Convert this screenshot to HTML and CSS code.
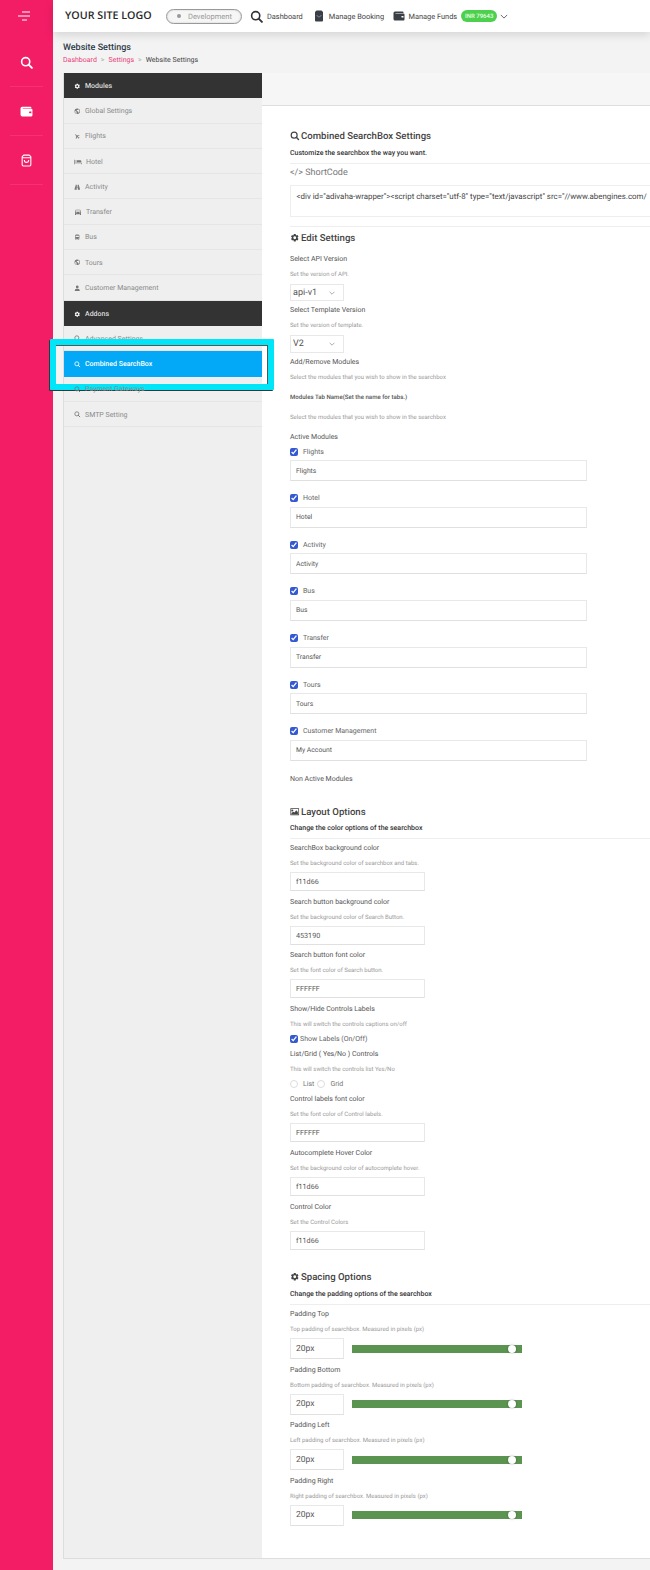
FILE: index.html
```html
<!DOCTYPE html>
<html lang="en">
<head>
<meta charset="utf-8">
<title>Website Settings</title>
<link rel="stylesheet" href="styles.css">
</head>
<body>
<svg class="defs" width="0" height="0" aria-hidden="true">
  <defs>
    <symbol id="i-cog" viewBox="0 0 24 24"><path d="M19.14 12.94c.04-.3.06-.61.06-.94 0-.32-.02-.64-.07-.94l2.03-1.58a.49.49 0 0 0 .12-.61l-1.92-3.32a.488.488 0 0 0-.59-.22l-2.39.96c-.5-.38-1.03-.7-1.62-.94l-.36-2.54a.484.484 0 0 0-.48-.41h-3.84c-.24 0-.43.17-.47.41l-.36 2.54c-.59.24-1.13.57-1.62.94l-2.39-.96c-.22-.08-.47 0-.59.22L2.74 8.87c-.12.21-.08.47.12.61l2.03 1.58c-.05.3-.09.63-.09.94s.02.64.07.94l-2.03 1.58a.49.49 0 0 0-.12.61l1.92 3.32c.12.22.37.29.59.22l2.39-.96c.5.38 1.03.7 1.62.94l.36 2.54c.05.24.24.41.48.41h3.84c.24 0 .44-.17.47-.41l.36-2.54c.59-.24 1.13-.56 1.62-.94l2.39.96c.22.08.47 0 .59-.22l1.92-3.32c.12-.22.07-.47-.12-.61l-2.01-1.58zM12 15.6A3.6 3.6 0 1 1 12 8.4a3.6 3.6 0 0 1 0 7.2z"/></symbol>
    <symbol id="i-globe" viewBox="0 0 24 24"><path d="M12 2a10 10 0 1 0 0 20 10 10 0 0 0 0-20zm-1 17.9A8 8 0 0 1 4.2 10L9 15v1a2 2 0 0 0 2 2v1.9zm6.9-2.5A2 2 0 0 0 16 16h-1v-3a1 1 0 0 0-1-1H8v-2h2a1 1 0 0 0 1-1V7h2a2 2 0 0 0 2-2v-.4a8 8 0 0 1 2.9 12.8z"/></symbol>
    <symbol id="i-plane" viewBox="0 0 24 24"><path transform="rotate(-45 12 12)" d="M21 16v-2l-8-5V3.5c0-.83-.67-1.5-1.5-1.5S10 2.67 10 3.5V9l-8 5v2l8-2.5V19l-2 1.5V22l3.5-1 3.5 1v-1.5L13 19v-5.5l8 2.5z"/></symbol>
    <symbol id="i-bed" viewBox="0 0 24 24"><path d="M1 5h2v9h20v5h-2v-3H3v3H1V5zm3 4a2 2 0 1 1 4 0 2 2 0 0 1-4 0zm5-2h10a3 3 0 0 1 3 3v3H9V7zM4 12h4v1H4v-1z"/></symbol>
    <symbol id="i-binoculars" viewBox="0 0 24 24"><path d="M6 3h4v3h4V3h4v3l1 2 3 10v3h-8v-8h-4v8H2v-3L5 8l1-2V3zm4 5v3h4V8h-4z"/></symbol>
    <symbol id="i-car" viewBox="0 0 24 24"><path d="M18.92 6.01C18.72 5.42 18.16 5 17.5 5h-11c-.66 0-1.21.42-1.42 1.01L3 12v8c0 .55.45 1 1 1h1c.55 0 1-.45 1-1v-1h12v1c0 .55.45 1 1 1h1c.55 0 1-.45 1-1v-8l-2.08-5.99zM6.5 16a1.5 1.5 0 1 1 0-3 1.5 1.5 0 0 1 0 3zm11 0a1.5 1.5 0 1 1 0-3 1.5 1.5 0 0 1 0 3zM5 11l1.5-4.5h11L19 11H5z"/></symbol>
    <symbol id="i-bus" viewBox="0 0 24 24"><path d="M4 16c0 .88.39 1.67 1 2.22V20c0 .55.45 1 1 1h1c.55 0 1-.45 1-1v-1h8v1c0 .55.45 1 1 1h1c.55 0 1-.45 1-1v-1.78c.61-.55 1-1.34 1-2.22V6c0-3.5-3.58-4-8-4s-8 .5-8 4v10zm3.5 1a1.5 1.5 0 1 1 0-3 1.5 1.5 0 0 1 0 3zm9 0a1.5 1.5 0 1 1 0-3 1.5 1.5 0 0 1 0 3zm1.5-6H6V6h12v5z"/></symbol>
    <symbol id="i-user" viewBox="0 0 24 24"><path d="M12 12a5 5 0 1 0 0-10 5 5 0 0 0 0 10zm0 2c-3 0-9 1.5-9 5v3h18v-3c0-3.500-6-5-9-5z"/></symbol>
    <symbol id="i-search" viewBox="0 0 24 24"><circle cx="10.500" cy="10.500" r="7.500" fill="none" stroke="currentColor" stroke-width="3"/><path d="M16 16l6 6" fill="none" stroke="currentColor" stroke-width="3.500" stroke-linecap="round"/></symbol>
    <symbol id="i-wallet" viewBox="0 0 24 24"><path d="M4 3h15a2 2 0 0 1 2 2v1H5v1h16a2 2 0 0 1 2 2v10a2 2 0 0 1-2 2H4a3 3 0 0 1-3-3V6a3 3 0 0 1 3-3zm14 9a1.500 1.500 0 1 0 0 3h3v-3h-3z"/></symbol>
    <symbol id="i-image" viewBox="0 0 24 24"><path d="M1 3h22v18H1V3zm2 2v14h18V5H3zm3 1.500a2.500 2.500 0 1 1 0 5 2.500 2.500 0 0 1 0-5zM4 18v-3l4-3 3 2 5-6 4 5v5H4z"/></symbol>
  </defs>
</svg>

<div class="app">
  <nav class="rail">
    <div class="rail-top">
      <svg class="menu-icon" viewBox="0 0 12 10"><path d="M4 1h8M0 5h12M4 9h5" fill="none" stroke="currentColor" stroke-width="1"/></svg>
    </div>
    <div class="rail-item"><svg class="rail-icon"><use href="#i-search"/></svg></div>
    <div class="rail-item"><svg class="rail-icon"><use href="#i-wallet"/></svg></div>
    <div class="rail-item">
      <svg class="rail-icon" viewBox="0 0 24 24"><path d="M7 2h10l3 3v15a2 2 0 0 1-2 2H6a2 2 0 0 1-2-2V5l3-3zM4 7h16M8 11c0 6 8 6 8 0" fill="none" stroke="currentColor" stroke-width="2"/></svg>
    </div>
  </nav>

  <div class="main">
    <header class="topbar">
      <div class="logo">YOUR SITE LOGO</div>
      <div class="env-pill"><span class="env-dot"></span>Development</div>
      <a class="top-link top-dash"><svg class="top-search"><use href="#i-search"/></svg>Dashboard</a>
      <a class="top-link top-book"><svg class="top-icon" viewBox="0 0 24 24"><path d="M7 1h10l3 3v17a2 2 0 0 1-2 2H6a2 2 0 0 1-2-2V4l3-3z" fill="#3a3f45"/><path d="M8 10c0 5 8 5 8 0" fill="none" stroke="#9aa0a6" stroke-width="1.500"/></svg>Manage Booking</a>
      <a class="top-link top-fund"><svg class="top-icon wallet"><use href="#i-wallet"/></svg>Manage Funds</a>
      <span class="balance">INR 79643</span>
      <svg class="top-chevron" viewBox="0 0 10 6"><path d="M1 1l4 4 4-4" fill="none" stroke="currentColor" stroke-width="1"/></svg>
    </header>

    <div class="page-head">
      <h1 class="page-title">Website Settings</h1>
      <div class="crumbs"><a class="crumb-link">Dashboard</a><span class="crumb-sep">&gt;</span><a class="crumb-link">Settings</a><span class="crumb-sep">&gt;</span><span class="crumb-now">Website Settings</span></div>
    </div>

    <div class="panel">
      <aside class="side">
        <div class="side-item side-head"><svg class="side-icon"><use href="#i-cog"/></svg>Modules</div>
        <div class="side-item"><svg class="side-icon"><use href="#i-globe"/></svg>Global Settings</div>
        <div class="side-item"><svg class="side-icon"><use href="#i-plane"/></svg>Flights</div>
        <div class="side-item"><svg class="side-icon wide"><use href="#i-bed"/></svg>Hotel</div>
        <div class="side-item"><svg class="side-icon"><use href="#i-binoculars"/></svg>Activity</div>
        <div class="side-item"><svg class="side-icon wide"><use href="#i-car"/></svg>Transfer</div>
        <div class="side-item"><svg class="side-icon"><use href="#i-bus"/></svg>Bus</div>
        <div class="side-item"><svg class="side-icon"><use href="#i-globe"/></svg>Tours</div>
        <div class="side-item"><svg class="side-icon"><use href="#i-user"/></svg>Customer Management</div>
        <div class="side-item side-head"><svg class="side-icon"><use href="#i-cog"/></svg>Addons</div>
        <div class="side-item"><svg class="side-icon"><use href="#i-search"/></svg>Advanced Settings</div>
        <div class="side-item side-active"><svg class="side-icon"><use href="#i-search"/></svg>Combined SearchBox<span class="callout"></span></div>
        <div class="side-item"><svg class="side-icon"><use href="#i-search"/></svg>Payment Gateways</div>
        <div class="side-item"><svg class="side-icon"><use href="#i-search"/></svg>SMTP Setting</div>
      </aside>

      <section class="content">
        <div class="tabbar"></div>
        <form class="form">
          <h2 class="sec-title first"><svg class="sec-icon"><use href="#i-search"/></svg>Combined SearchBox Settings</h2>
          <p class="sec-sub">Customize the searchbox the way you want.</p>
          <hr class="rule">
          <div class="code-title">&lt;/&gt; ShortCode</div>
          <div class="code-box">&lt;div id="adivaha-wrapper"&gt;&lt;script charset="utf-8" type="text/javascript" src="//www.abengines.com/</div>
          <hr class="rule rule-code">

          <h2 class="sec-title edit"><svg class="sec-icon"><use href="#i-cog"/></svg>Edit Settings</h2>
          <div class="label lead">Select API Version</div>
          <div class="help">Set the version of API.</div>
          <select class="select"><option>api-v1</option></select>
          <div class="label tight">Select Template Version</div>
          <div class="help">Set the version of template.</div>
          <select class="select select-v2"><option>V2</option></select>
          <div class="label tight">Add/Remove Modules</div>
          <div class="help">Select the modules that you wish to show in the searchbox</div>
          <div class="note">Modules Tab Name(Set the name for tabs.)</div>
          <div class="help spaced">Select the modules that you wish to show in the searchbox</div>
          <div class="label active-head">Active Modules</div>

          <label class="check-row"><input type="checkbox" checked>Flights</label>
          <input class="text module-input" value="Flights">
          <label class="check-row"><input type="checkbox" checked>Hotel</label>
          <input class="text module-input" value="Hotel">
          <label class="check-row"><input type="checkbox" checked>Activity</label>
          <input class="text module-input" value="Activity">
          <label class="check-row"><input type="checkbox" checked>Bus</label>
          <input class="text module-input" value="Bus">
          <label class="check-row"><input type="checkbox" checked>Transfer</label>
          <input class="text module-input" value="Transfer">
          <label class="check-row"><input type="checkbox" checked>Tours</label>
          <input class="text module-input" value="Tours">
          <label class="check-row"><input type="checkbox" checked>Customer Management</label>
          <input class="text module-input" value="My Account">
          <div class="label">Non Active Modules</div>

          <h2 class="sec-title section"><svg class="sec-icon"><use href="#i-image"/></svg>Layout Options</h2>
          <p class="sec-sub">Change the color options of the searchbox</p>
          <hr class="rule">
          <div class="label after-rule">SearchBox background color</div>
          <div class="help">Set the background color of searchbox and tabs.</div>
          <input class="text color-input" value="f11d66">
          <div class="label">Search button background color</div>
          <div class="help">Set the background color of Search Button.</div>
          <input class="text color-input" value="453190">
          <div class="label">Search button font color</div>
          <div class="help">Set the font color of Search button.</div>
          <input class="text color-input" value="FFFFFF">
          <div class="label">Show/Hide Controls Labels</div>
          <div class="help">This will switch the controls captions on/off</div>
          <label class="check-row compact"><input type="checkbox" checked>Show Labels (On/Off)</label>
          <div class="label">List/Grid ( Yes/No ) Controls</div>
          <div class="help">This will switch the controls list Yes/No</div>
          <div class="radio-row">
            <label class="radio"><input type="radio" name="view">List</label>
            <label class="radio"><input type="radio" name="view">Grid</label>
          </div>
          <div class="label">Control labels font color</div>
          <div class="help">Set the font color of Control labels.</div>
          <input class="text color-input" value="FFFFFF">
          <div class="label">Autocomplete Hover Color</div>
          <div class="help">Set the background color of autocomplete hover.</div>
          <input class="text color-input" value="f11d66">
          <div class="label">Control Color</div>
          <div class="help">Set the Control Colors</div>
          <input class="text color-input" value="f11d66">

          <h2 class="sec-title section spacing"><svg class="sec-icon"><use href="#i-cog"/></svg>Spacing Options</h2>
          <p class="sec-sub">Change the padding options of the searchbox</p>
          <hr class="rule">
          <div class="label after-rule">Padding Top</div>
          <div class="help">Top padding of searchbox. Measured in pixels (px)</div>
          <div class="range-row"><input class="text px-input" value="20px"><input class="range" type="range" min="0" max="20.8" step="0.1" value="20"></div>
          <div class="label">Padding Bottom</div>
          <div class="help">Bottom padding of searchbox. Measured in pixels (px)</div>
          <div class="range-row"><input class="text px-input" value="20px"><input class="range" type="range" min="0" max="20.8" step="0.1" value="20"></div>
          <div class="label">Padding Left</div>
          <div class="help">Left padding of searchbox. Measured in pixels (px)</div>
          <div class="range-row"><input class="text px-input" value="20px"><input class="range" type="range" min="0" max="20.8" step="0.1" value="20"></div>
          <div class="label">Padding Right</div>
          <div class="help">Right padding of searchbox. Measured in pixels (px)</div>
          <div class="range-row"><input class="text px-input" value="20px"><input class="range" type="range" min="0" max="20.8" step="0.1" value="20"></div>
        </form>
      </section>
    </div>
  </div>
</div>
</body>
</html>
```

FILE: styles.css
```css
* { box-sizing: border-box; }
html, body { margin: 0; padding: 0; height: 1570px; overflow: hidden; }
body { font-family: Roboto, "Liberation Sans", sans-serif; background: #f3f3f3; color: #555; text-rendering: geometricPrecision; }
input, select { text-rendering: geometricPrecision; }
.defs { position: absolute; }
svg { fill: currentColor; display: block; }
.app { display: flex; width: 650px; height: 1570px; }

/* left rail */
.rail { width: 53px; flex: none; background: #f31d66; color: #fff; display: flex; flex-direction: column; align-items: center; }
.rail-top { height: 38px; width: 100%; display: flex; justify-content: center; padding-top: 11px; }
.menu-icon { width: 12px; height: 10px; margin-right: 5px; }
.rail-item { width: 33px; height: 49px; display: flex; align-items: center; justify-content: center; border-bottom: 1px solid rgba(255,255,255,.09); }
.rail-icon { width: 13px; height: 13px; }

/* main column */
.main { flex: 1; min-width: 0; display: flex; flex-direction: column; }
.topbar { height: 32px; flex: none; background: #fff; display: flex; align-items: center; padding-left: 12px; box-shadow: 0 3px 10px rgba(0,0,0,.13); position: relative; }
.logo { font-family: "Open Sans", sans-serif; font-weight: 600; font-size: 10.700px; color: #2a2a2a; width: 101px; white-space: nowrap; }
.env-pill { width: 76px; height: 15px; border: 1px solid #999; border-radius: 8px; background: #f6f6f6; display: flex; align-items: center; font-size: 7.500px; color: #999; padding-left: 10px; gap: 7px; box-shadow: inset 0 0 2px rgba(0,0,0,.2); white-space: nowrap; }
.env-dot { width: 4px; height: 4px; border-radius: 50%; background: #999; flex: none; }
.top-link { display: flex; align-items: center; font-size: 7.400px; color: #444; white-space: nowrap; }
.top-dash { margin-left: 8px; }
.top-search { width: 13px; height: 13px; margin-right: 4px; color: #333; }
.top-book { margin-left: 10px; }
.top-fund { margin-left: 8.500px; }
.top-icon { width: 12px; height: 12px; margin-right: 4px; color: #3a3f45; }
.balance { margin-left: 4px; width: 36px; height: 12px; border-radius: 6px; background: #4dd04d; color: #e8ffe8; font-size: 6px; font-weight: 500; display: flex; align-items: center; justify-content: center; white-space: nowrap; }
.top-chevron { width: 8px; height: 5px; margin-left: 3px; color: #444; }

.page-head { height: 41px; flex: none; padding: 10px 0 0 10px; }
.page-title { margin: 0; font-size: 9px; line-height: 12px; font-weight: 500; color: #2f3b4a; }
.crumbs { display: flex; font-size: 7px; line-height: 12px; color: #444; }
.crumb-link { color: #e83e78; }
.crumb-sep { margin: 0 4px; color: #999; }

/* panel */
.panel { margin-left: 10px; display: flex; height: 1486px; border-left: 1px solid #ddd; border-bottom: 1px solid #ddd; }
.side { width: 198px; flex: none; background: #efefef; }
.side-item { height: 25.300px; display: flex; align-items: center; padding: 1px 0 0 10px; font-size: 7px; color: #8a8a8a; border-bottom: 1px solid #e5e5e5; white-space: nowrap; position: relative; }
.side-icon { width: 6.500px; height: 6.500px; margin-right: 4.500px; flex: none; color: #777; }
.side-icon.wide { width: 8px; height: 8px; margin-right: 4px; }
.side-head { background: #333; color: #ddd; font-weight: 500; border-bottom: 0; }
.side-head .side-icon { color: #fff; }
.side-active { background: #03a9f7; color: #fff; font-weight: 500; border-bottom: 0; }
.side-active .side-icon { color: #fff; }
.callout { position: absolute; left: -14px; top: -12px; width: 224px; height: 51px; border: 6px solid #00e5f8; box-shadow: -1px 1px 0 #2b3a3a, inset 0 1px 0 #555, inset -1px 0 0 #555; border-radius: 1px; pointer-events: none; }

/* content */
.content { flex: 1; min-width: 0; background: #fff; overflow: hidden; }
.tabbar { height: 33px; background: #f6f6f6; border-bottom: 1px solid #ddd; }
.form { padding: 23px 0 0 28px; }
.sec-title { margin: 0; display: flex; align-items: center; font-size: 9.600px; line-height: 16px; font-weight: 500; color: #444; white-space: nowrap; }
.sec-icon { width: 9.500px; height: 9.500px; margin: 0 1.500px 2px 0; flex: none; color: #444; }
.sec-title.edit { margin-top: 4px; }
.sec-title.section { margin-top: 18px; }
.sec-title.spacing { margin-top: 20px; }
.sec-sub { margin: 2px 0 0; font-size: 7px; line-height: 12px; font-weight: 500; color: #333; }
.sec-title.section + .sec-sub { margin-top: 1px; }
.sec-title.spacing + .sec-sub { margin-top: 2px; }
.rule { margin: 4px 0 0; border: 0; border-top: 1px solid #eee; height: 0; }
.rule-code { margin-top: 9px; }
.code-title { margin-top: 2px; font-size: 9px; line-height: 14px; color: #777; }
.code-box { margin-top: 5px; height: 32px; border: 1px solid #eee; border-right: 0; padding: 5px 0 0 5.500px; font-size: 7.900px; line-height: 11px; color: #444; white-space: nowrap; overflow: hidden; }
.label { font-size: 7px; line-height: 16px; color: #555; white-space: nowrap; }
.label.lead { margin-top: 4px; }
.label.tight { margin-top: 1px; }
.label.after-rule { margin-top: 1.500px; }
.label.active-head { margin-top: 5px; line-height: 14px; }
.help { font-size: 6px; line-height: 15px; color: #999; white-space: nowrap; }
.help.spaced { margin-top: 5px; }
.note { margin-top: 5px; font-size: 6.100px; line-height: 15px; font-weight: 500; color: #555; }

.select { display: block; width: 54px; height: 17px; margin-top: 2px; border: 1px solid #e8e8e8; background: #fff url("data:image/svg+xml,%3Csvg xmlns='http://www.w3.org/2000/svg' viewBox='0 0 10 6'%3E%3Cpath d='M1 1l4 4 4-4' fill='none' stroke='%23777' stroke-width='1'/%3E%3C/svg%3E") no-repeat right 8px center / 6px 4px; appearance: none; -webkit-appearance: none; padding: 0 0 0 2px; font-family: inherit; font-size: 9px; color: #555; border-radius: 0; outline: 0; }
.select-v2 { height: 18px; }

.text { display: block; border: 1px solid #e8e8e8; border-bottom-color: #e0e0e0; background: #fff; padding: 0 0 0 5px; font-family: inherit; font-size: 7.200px; color: #555; border-radius: 0; outline: 0; }
.check-row { display: flex; align-items: center; height: 15px; font-size: 7px; color: #666; white-space: nowrap; }
.check-row input { width: 8px; height: 8px; margin: 0 5px 0 0; accent-color: #3559d0; flex: none; }
.check-row.compact { height: 14px; }
.check-row.compact input { margin-right: 2px; }
.module-input { width: 297px; height: 21px; margin: 1px 0 9.670px; font-size: 6.800px; }
.color-input { width: 135px; height: 19px; margin: 1px 0 2.700px; }
.radio-row { display: flex; height: 14px; align-items: center; gap: 3px; }
.radio { display: flex; align-items: center; font-size: 7px; color: #777; }
.radio input { appearance: none; -webkit-appearance: none; width: 8px; height: 8px; margin: 0 5px 0 0; border: 1px solid #ddd; border-radius: 50%; background: #fff; }

.range-row { display: flex; align-items: center; gap: 8px; margin: 1px 0 2.600px; }
.px-input { width: 54px; height: 21px; font-size: 8.500px; }
.range { -webkit-appearance: none; appearance: none; width: 170px; height: 8px; margin: 0; background: #5b9351; outline: 0; }
.range::-webkit-slider-thumb { -webkit-appearance: none; width: 8px; height: 8px; border-radius: 50%; background: #fff; box-shadow: 0 0 2px rgba(0,0,0,.35); }
```
